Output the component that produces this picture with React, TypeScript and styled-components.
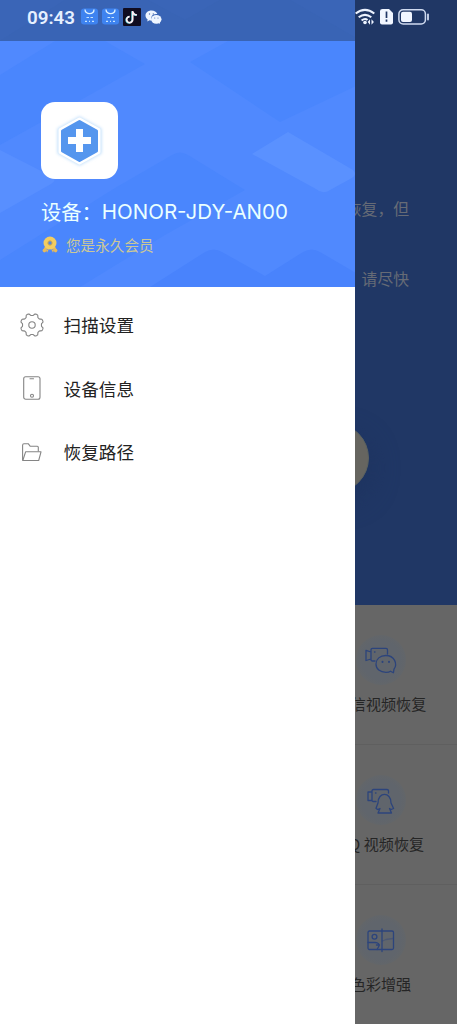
import React from "react";
import styled, { createGlobalStyle } from "styled-components";

const Global = createGlobalStyle`
  * { box-sizing: border-box; }
  body { margin: 0; font-family: "Noto Sans CJK SC", sans-serif; }
  svg { display: block; flex: none; }
`;

const Screen = styled.div`
  position: relative;
  display: flex;
  width: 457px;
  height: 1024px;
  overflow: hidden;
  background: #666;
`;

const StatusBar = styled.header`
  position: absolute;
  inset: 0 0 auto 0;
  height: 41px;
  display: flex;
  align-items: flex-start;
  padding: 8px 26px 0 27px;
`;
const Time = styled.span`
  width: 53.5px;
  font: 600 18.8px/20px Roboto, sans-serif;
  letter-spacing: 0;
  color: #e6f0ff;
`;
const Apps = styled.div`
  display: flex;
  gap: 4.3px;
  flex: 1;
`;
const Indicators = styled.div`
  display: flex;
  gap: 5px;
  margin-right: 1px;
`;

const Drawer = styled.aside`
  width: 355.4px;
  flex: none;
  background: #fff;
`;
const Profile = styled.section`
  display: grid;
  height: 287px;
  background: #4a86fd;
  > * { grid-area: 1 / 1; }
`;
const ProfileBody = styled.div`
  isolation: isolate;
  padding: 102px 0 0 41px;
`;
const Logo = styled.div`
  width: 77px;
  height: 77px;
  border-radius: 14px;
  background: #fff;
`;
const Device = styled.div`
  margin-top: 17px;
  height: 30px;
  display: flex;
  align-items: center;
  font-size: 20.3px;
  line-height: 30px;
  color: #eaffff;
  white-space: nowrap;
`;
const Model = styled.span`
  font-family: Inter, sans-serif;
  font-size: 20.5px;
  letter-spacing: 0;
  padding-top: 1px;
`;
const Member = styled.div`
  display: flex;
  align-items: center;
  gap: 8px;
  height: 36px;
  padding-left: 1px;
  font-size: 14.6px;
  color: #ccc896;
  svg { margin-top: 2px; }
`;
const Menu = styled.nav`
  padding-top: 6px;
`;
const MenuItem = styled.div`
  display: flex;
  align-items: center;
  height: 63.5px;
  padding-left: 19.6px;
  gap: 20px;
  font-size: 17.6px;
  color: #222;
`;

const Page = styled.main`
  flex: 1;
  min-width: 0;
  overflow: hidden;
  background: #666;
`;
const Hero = styled.section`
  height: 604.5px;
  background: #203765;
  padding-top: 191px;
`;
const Notice = styled.p<{ $gap?: number }>`
  display: flex;
  justify-content: flex-end;
  margin: 0 48px ${(p) => p.$gap ?? 0}px 0;
  height: 35px;
  line-height: 35px;
  font-size: 15.8px;
  color: #666b76;
  white-space: nowrap;
`;
const ScanButton = styled.div`
  width: 70px;
  height: 70px;
  margin-left: -56.5px;
  border-radius: 50%;
  background: #666560;
  border: 1px solid #5c625f;
  box-shadow: 4px 10px 24px #1e3460;
`;
const Tile = styled.article`
  display: flex;
  flex-direction: column;
  align-items: center;
  width: 152px;
  height: 140px;
  margin-left: -50.4px;
  padding-top: 30px;
  border-bottom: 1px solid #5f5f5f;
`;
const TileIcon = styled.div`
  width: 50px;
  height: 50px;
  display: grid;
  place-items: center;
  border-radius: 50%;
  background: radial-gradient(circle, #60656c 55%, #636669 72%);
`;
const TileLabel = styled.span`
  margin-top: 6.5px;
  font-size: 15.1px;
  line-height: 24px;
  color: #252525;
  white-space: nowrap;
`;

const Pattern = () => (
  <svg width="356" height="287" viewBox="0 0 356 287">
    <path d="M0 41H356V287H0Z" fill="#5089fe" />
    <path d="M190 62 228 41H356V86L280 122ZM0 75 55 41H105L145 64 45 120 0 145ZM115 188 172 155Q180 150 188 155L245 190 165 235 80 287H0V260Z" fill="#4a86fd" />
    <path d="M0 150 51 176Q58 180 51 184L0 213Z" fill="#588fff" />
    <path d="M252 154 288 132 353 170Q358 175 350 179L330 190Q323 195 316 189Z" fill="#5a91ff" />
    <path d="M205 252Q214 247 222 252L265 276 303 252Q312 247 320 252L356 273V287H150Z" fill="#4983fc" />
    <path d="M0 0H356V41H0Z" fill="#3a65b7" />
    <path d="M0 41 65 0H148L185 20 220 0H290L356 38V41Z" fill="#3863b4" opacity=".5" />
  </svg>
);

const Hexagon = () => (
  <svg width="77" height="77" viewBox="0 0 77 77">
    <defs><filter id="halo" x="-30%" y="-30%" width="160%" height="160%"><feGaussianBlur stdDeviation="1.8" /></filter></defs>
    <path d="M38.5 15 60 27V51L38.5 63 17 51V27Z" fill="#b9dcfb" stroke="#d2e8fc" strokeWidth="2" strokeLinejoin="round" filter="url(#halo)" />
    <path d="M38.5 17.5 57.5 28V50L38.5 60.5 19.5 50V28Z" fill="#fff" stroke="#fff" strokeWidth="4" strokeLinejoin="round" />
    <path d="M38.5 19.5 55.5 29V49L38.5 58.5 21.5 49V29Z" fill="#5596ee" stroke="#5596ee" strokeWidth="3" strokeLinejoin="round" />
    <path d="M35 27H42V35H50V42H42V50H35V42H27V35H35Z" fill="#fff" />
  </svg>
);

const Medal = () => (
  <svg width="16" height="18" viewBox="0 0 16 18">
    <path d="M5 10 2.4 14.8M11 10 13.6 14.8" stroke="#e6b95c" strokeWidth="3" />
    <circle cx="2.4" cy="14.6" r="1.8" fill="#e6b95c" />
    <circle cx="13.6" cy="14.6" r="1.8" fill="#e6b95c" />
    <path d="M4 14 5 16.8 7 13ZM12 14 11 16.8 9 13Z" fill="#e6b95c" />
    <circle cx="8" cy="7" r="6.5" fill="#f3cd62" />
    <circle cx="8" cy="7" r="2.2" fill="#5587df" stroke="#dfad42" />
  </svg>
);

const Bag = () => (
  <svg width="17" height="17" viewBox="0 0 17 17">
    <rect y=".5" width="17" height="16" rx="3" fill="#3e83f0" />
    <path d="M4 1.5C4 7 13 7 13 1.5" fill="none" stroke="#dff2ff" strokeWidth="1.3" />
    <path d="M5.5 9.5H8M9.5 9.5H12M4 13.3H6M8 13.3H9M11 13.3H13" stroke="#c5e4ff" strokeWidth="1.2" />
  </svg>
);
const Note = () => (
  <svg width="18" height="18" viewBox="0 0 18 18">
    <rect width="18" height="18" rx="1" fill="#100c20" />
    <path d="M9.7 3V11.5A3 3 0 1 1 6.7 8.6M9.7 3C10 5.5 11.5 6.7 14 7" transform="translate(-.6 .3)" fill="none" stroke="#62dfe3" strokeWidth="1.6" />
    <path d="M9.7 3V11.5A3 3 0 1 1 6.7 8.6M9.7 3C10 5.5 11.5 6.7 14 7" fill="none" stroke="#fff0f5" strokeWidth="1.7" />
  </svg>
);
const Chat = () => (
  <svg width="17" height="18" viewBox="0 -1.5 17 18">
    <path d="M6.5 1C3 1 .5 3.2.5 6c0 1.6.9 3 2.2 3.9L2.2 12l2.3-1.2c.8.2 1.5.3 2.3.2C5 7 8 4 12.3 4.6 11.5 2.4 9.3 1 6.5 1Z" fill="#eef5ff" />
    <ellipse cx="11.3" cy="9.8" rx="5.2" ry="4.4" fill="#eef5ff" />
    <path d="m13 13 2 1.5-.5-3Z" fill="#eef5ff" />
    <g fill="#5473af"><circle cx="4.5" cy="4.5" r=".7" /><circle cx="8.3" cy="4.5" r=".7" /><circle cx="9.7" cy="8.5" r=".6" /><circle cx="13" cy="8.5" r=".6" /></g>
  </svg>
);

const Wifi = () => (
  <svg width="20" height="18" viewBox="0 0 20 18">
    <g fill="none" stroke="#edf3ff" strokeWidth="2.1">
      <path d="M.7 5.5Q10-1.8 19.3 5.5M3.7 9.3Q10 4.3 16.3 9.3M6.6 12.5Q10 9.8 12.5 12" />
    </g>
    <circle cx="10" cy="14.5" r="1.8" fill="#edf3ff" />
    <path d="m15 11.2-2.3 2.8 2.3 2.8ZM16.5 11.2l2.4 2.8-2.4 2.8Z" fill="#edf3ff" />
  </svg>
);
const Sim = () => (
  <svg width="13" height="17" viewBox="0 0 13 17">
    <path d="M2.5 1H9l4 4v9.5q0 2-2 2H2q-2 0-2-2V3Q0 1 2.5 1Z" fill="#f1f6ff" />
    <path d="M6.5 3.5V10M6.5 11.6V13.7" stroke="#203765" strokeWidth="1.7" />
  </svg>
);
const Battery = () => (
  <svg width="32" height="18" viewBox="0 0 32 18">
    <rect x=".9" y="1.7" width="26.5" height="14.3" rx="4.2" fill="none" stroke="#cfdaef" strokeWidth="1.5" />
    <rect x="3" y="3.8" width="11" height="10.2" rx="2" fill="#f1f6ff" />
    <path d="M30 6.5V11.5" stroke="#cfdaef" strokeWidth="1.8" strokeLinecap="round" />
  </svg>
);

const gearPath = (() => {
  const pts: string[] = [];
  for (let i = 0; i <= 96; i++) {
    const a = (i / 96) * Math.PI * 2;
    const r = 10.5 + 1.05 * Math.tanh(2.4 * Math.cos(8 * (a - Math.PI / 8)));
    pts.push(`${(12 + r * Math.cos(a)).toFixed(2)} ${(12 + r * Math.sin(a)).toFixed(2)}`);
  }
  return `M${pts.join("L")}Z`;
})();

const line = { fill: "none", stroke: "#858585", strokeWidth: 1.1, strokeLinejoin: "round" as const, strokeLinecap: "round" as const };
const Gear = () => (
  <svg width="24" height="24" viewBox="0 0 24 24" {...line}>
    <path d={gearPath} />
    <circle cx="12" cy="12" r="3.2" />
  </svg>
);
const Phone = () => (
  <svg width="24" height="24" viewBox="0 0 24 24" {...line}>
    <rect x="3.7" y=".7" width="16.3" height="22.6" rx="2" />
    <path d="M10 2.8H13.5" />
    <circle cx="12" cy="19.7" r="1.5" />
  </svg>
);
const Folder = () => (
  <svg width="24" height="24" viewBox="0 0 24 24" {...line}>
    <path d="M2.6 20V5.2Q2.6 3.7 4 3.7H8.2L10.3 6.3H17.3Q18.3 6.3 18.3 7.3V11" />
    <path d="M2.8 20.5 5.6 11.8H21L18.7 20.5Z" />
  </svg>
);

const tint = { fill: "none", stroke: "#2c447c", strokeWidth: 1.3, strokeLinejoin: "round" as const, strokeLinecap: "round" as const };
const ChatVideo = () => (
  <svg width="34" height="30" viewBox="0 0 34 30" {...tint}>
    <path d="M11 16H8.5Q7 16 7 14.5V5Q7 3.4 8.5 3.4H22Q23.5 3.4 23.5 5V9M7 7 2 5.3V15.5L7 14M10.5 7H11" />
    <path d="M30 24.2C33.8 19 30.5 10.5 21.8 10.5 16 10.5 12 14 12 19S16 27.3 22 27.3C24 27.3 25.5 27 26.5 26.2L29.4 27.8Z" />
    <path d="M18.5 16.7V17M25 16.7V17" strokeWidth="2" />
  </svg>
);
const PenguinVideo = () => (
  <svg width="34" height="30" viewBox="0 0 34 30" {...tint}>
    <path d="M12 16.5H9Q8 16.5 8 15V6Q8 4.5 9.5 4.5H23Q24.5 4.5 24.5 6V8M8 7H4V15.5H8M11.5 8H12" />
    <path d="M14 18C14 6.5 27 6.5 27 18L29.6 23.5 27.2 24.5 25.5 23.5 27.5 28H14L16 23.5 13.5 24.5 12 23.3Z" />
  </svg>
);
const ImageSplit = () => (
  <svg width="34" height="30" viewBox="0 0 34 30" {...tint}>
    <rect x="4" y="6" width="25.5" height="18.5" rx="1.5" />
    <path d="M18 4V26.5M4 17.5H11Q16 18 15 21L13 24.5M12.5 20H15.5" />
    <path d="M18.5 16 22 14.5 29 13.5" opacity=".4" />
    <circle cx="10.5" cy="11.8" r="2.4" />
  </svg>
);

const menu = [
  { icon: <Gear />, label: "扫描设置" },
  { icon: <Phone />, label: "设备信息" },
  { icon: <Folder />, label: "恢复路径" },
];
const tiles = [
  { icon: <ChatVideo />, label: "微信视频恢复" },
  { icon: <PenguinVideo />, label: "QQ 视频恢复" },
  { icon: <ImageSplit />, label: "色彩增强" },
];

export default function App() {
  return (
    <>
      <Global />
      <Screen>
        <Drawer>
          <Profile>
            <Pattern />
            <ProfileBody>
              <Logo><Hexagon /></Logo>
              <Device>设备：<Model>HONOR-JDY-AN00</Model></Device>
              <Member><Medal />您是永久会员</Member>
            </ProfileBody>
          </Profile>
          <Menu>
            {menu.map((m) => <MenuItem key={m.label}>{m.icon}{m.label}</MenuItem>)}
          </Menu>
        </Drawer>
        <Page>
          <Hero>
            <Notice $gap={35}>恢复，但</Notice>
            <Notice $gap={127}>请尽快</Notice>
            <ScanButton />
          </Hero>
          {tiles.map((t) => (
            <Tile key={t.label}>
              <TileIcon>{t.icon}</TileIcon>
              <TileLabel>{t.label}</TileLabel>
            </Tile>
          ))}
        </Page>
        <StatusBar>
          <Time>09:43</Time>
          <Apps><Bag /><Bag /><Note /><Chat /></Apps>
          <Indicators><Wifi /><Sim /><Battery /></Indicators>
        </StatusBar>
      </Screen>
    </>
  );
}
